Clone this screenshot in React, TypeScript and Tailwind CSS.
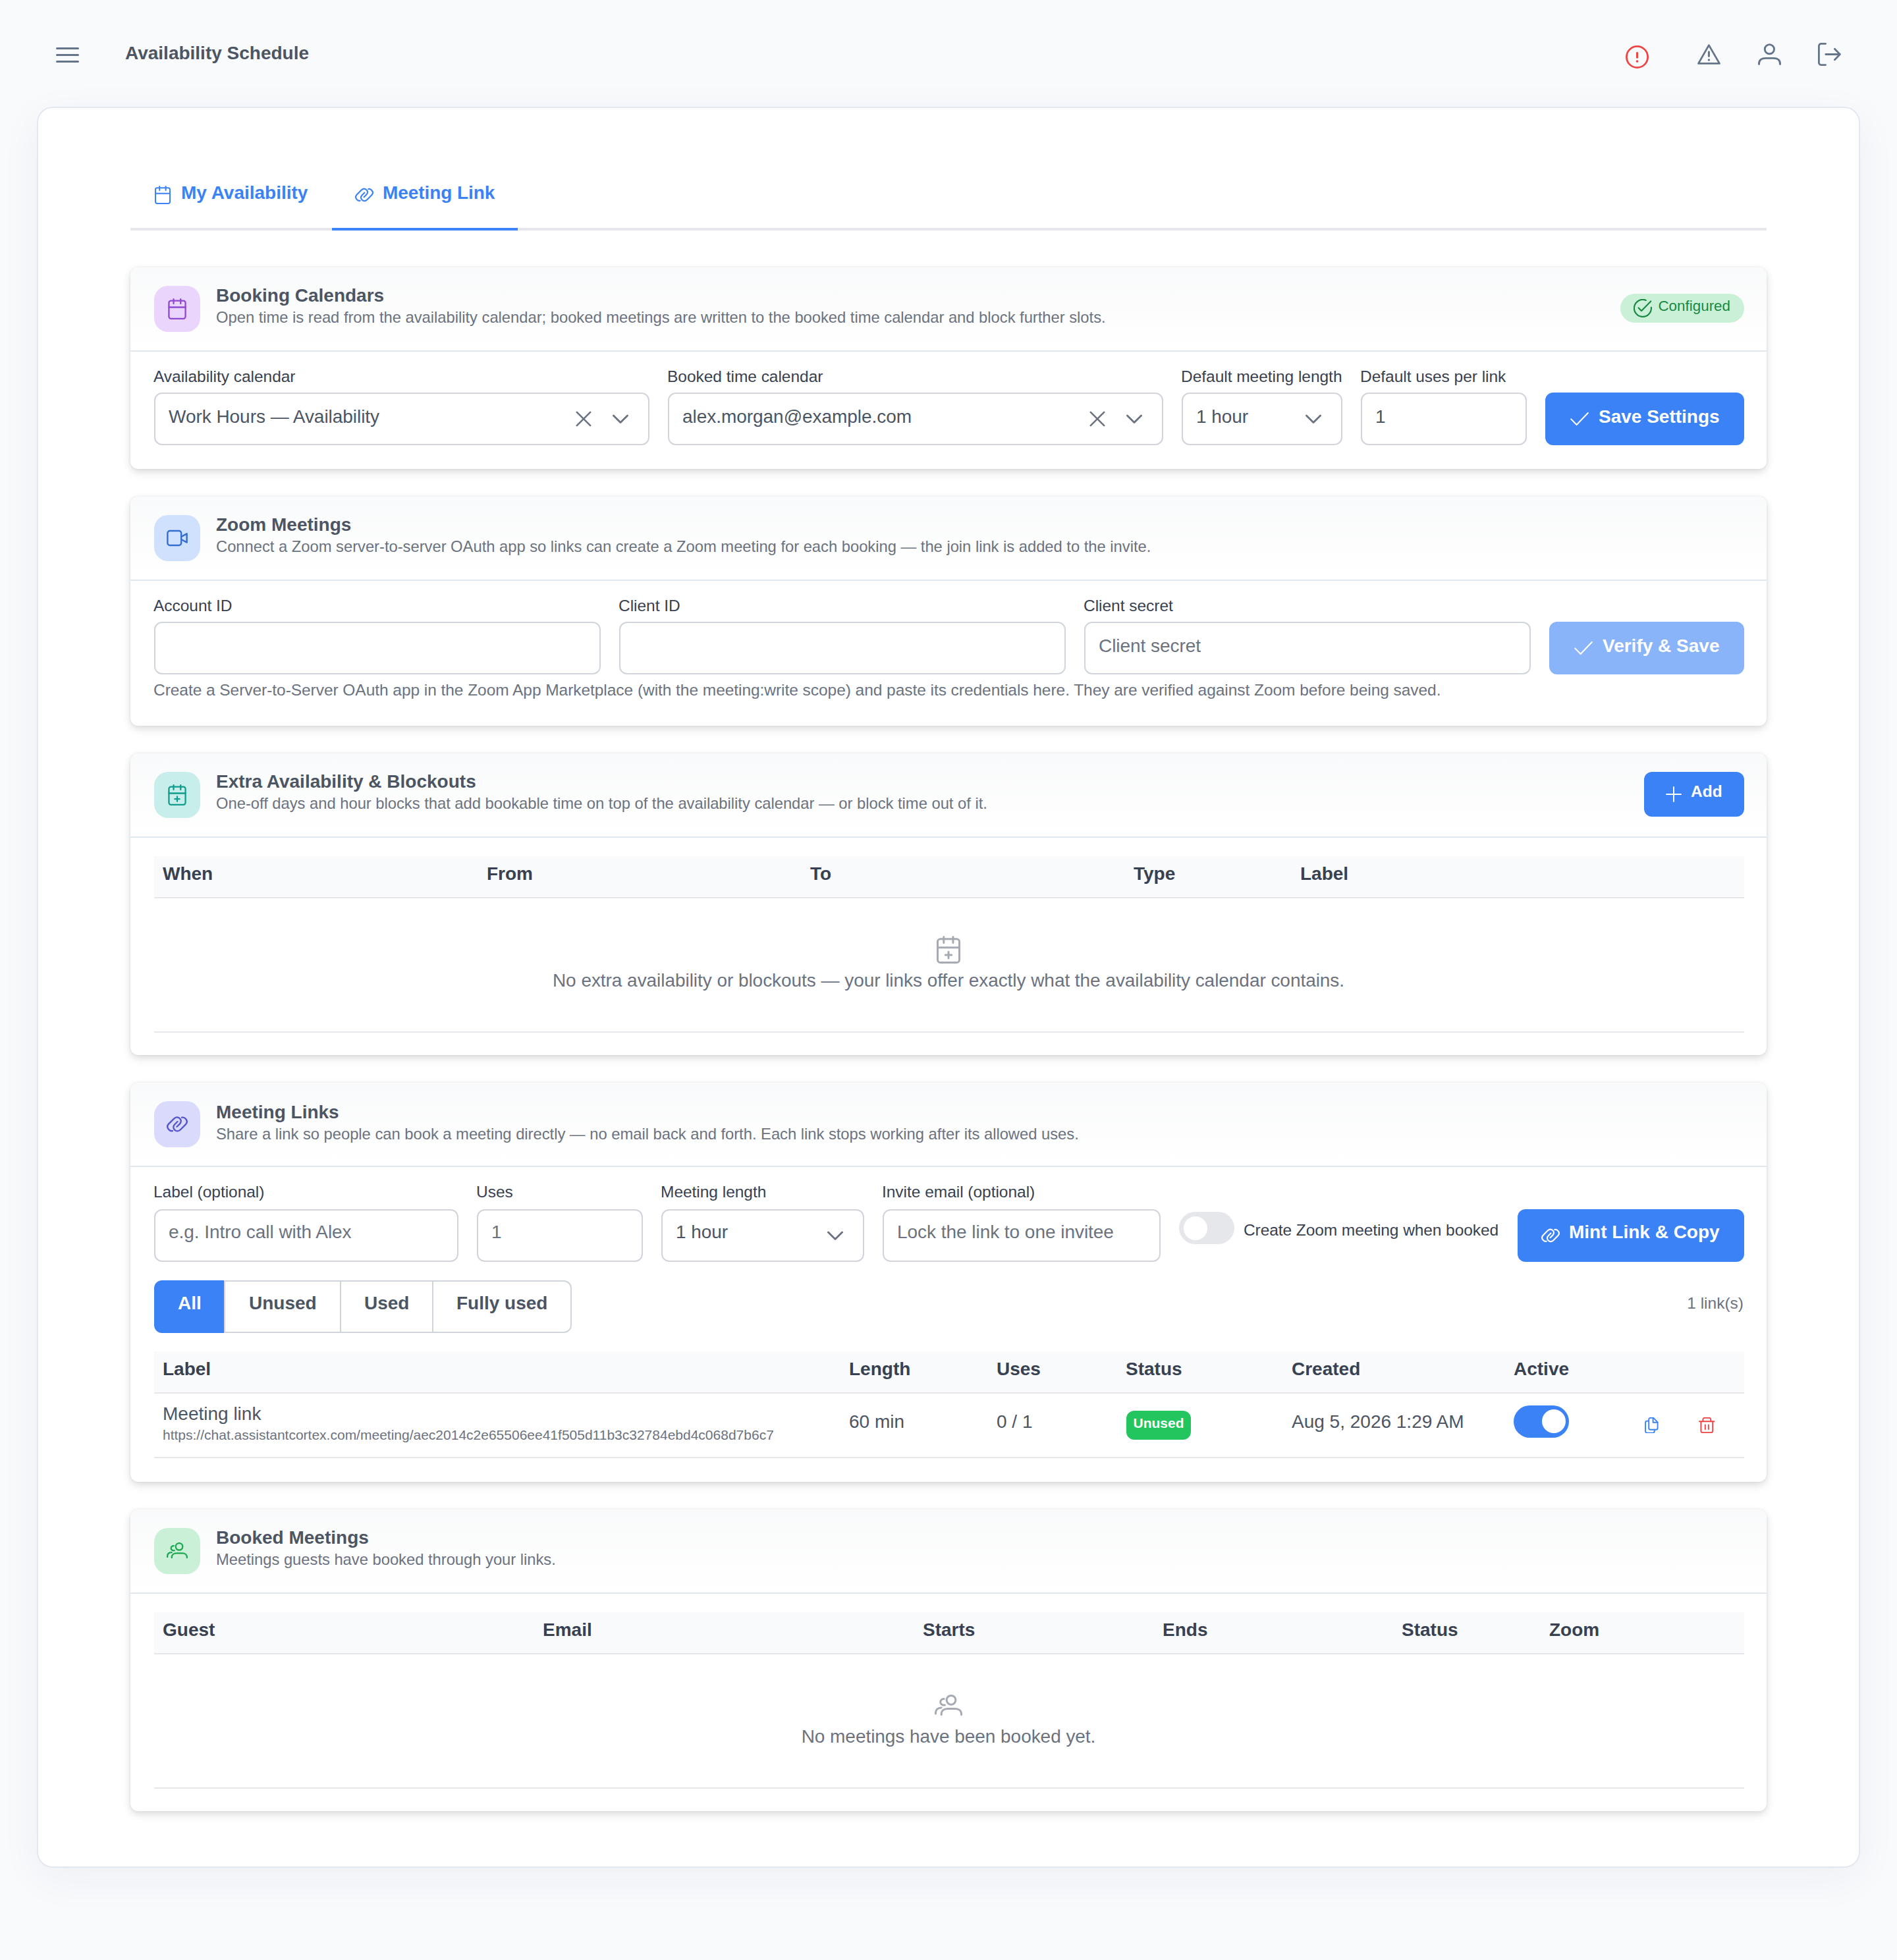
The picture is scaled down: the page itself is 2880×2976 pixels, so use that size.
import type { ReactNode } from "react";

type IconProps = { className?: string };

/* ---------- icons ---------- */

function Menu() {
  return (
    <svg viewBox="0 0 35 35" className="mt-[5px] size-[35px]" fill="none" stroke="currentColor" strokeWidth="3" strokeLinecap="round">
      <path d="M1.5 7.5H33.5M1.5 17.5H33.5M1.5 27.5H33.5" />
    </svg>
  );
}

function AlertCircle() {
  return (
    <svg viewBox="0 0 35 35" className="size-[35px]" fill="none" stroke="currentColor" strokeWidth="2.8" strokeLinecap="round">
      <circle cx="17.5" cy="17.5" r="16.1" />
      <path d="M17.5 11.3V18.2" strokeWidth="3" />
      <path d="M17.5 23.9V24.2" strokeWidth="3.4" />
    </svg>
  );
}

function AlertTriangle() {
  return (
    <svg viewBox="0 0 35 35" className="size-[35px]" fill="none" stroke="currentColor" strokeWidth="2.8" strokeLinecap="round" strokeLinejoin="round">
      <path d="M17.4 3.6 33.5 31.4H1.5Z" />
      <path d="M17.4 13.8V20.2" strokeWidth="3" />
      <path d="M17.4 25.9V26.1" strokeWidth="3.4" />
    </svg>
  );
}

function User() {
  return (
    <svg viewBox="0 0 35 35" className="size-[35px]" fill="none" stroke="currentColor" strokeWidth="2.9" strokeLinecap="round">
      <circle cx="17.4" cy="9.7" r="7.1" />
      <path d="M1.5 32.6V31.4C1.5 26 5.6 23.4 11.4 23.4H23.6C29.4 23.4 33.5 26 33.5 31.4V32.6" />
    </svg>
  );
}

function SignOut() {
  return (
    <svg viewBox="0 0 35 35" className="size-[35px]" fill="none" stroke="currentColor" strokeWidth="2.8" strokeLinecap="round" strokeLinejoin="round">
      <path d="M11.6 1.4H4.8A3.4 3.4 0 0 0 1.4 4.8V30.2A3.4 3.4 0 0 0 4.8 33.6H11.6" />
      <path d="M11.8 17.5H33.4M25.4 9.2 33.4 17.5 25.4 25.8" />
    </svg>
  );
}

function Calendar({ className = "size-[28px]", plus = false }: IconProps & { plus?: boolean }) {
  return (
    <svg viewBox="0 0 28 28" className={className} fill="none" stroke="currentColor" strokeWidth="2" strokeLinecap="round" strokeLinejoin="round">
      <rect x="3" y="3.2" width="22" height="23.8" rx="2.7" />
      <path d="M3 11.8H25M9.2 1V7M18.6 1V7" />
      {plus && <path d="M14 16.2V22.6M10.8 19.4H17.2" />}
    </svg>
  );
}

function Link({ className = "size-[28px]" }: IconProps) {
  const half = "M7.7 22.8C5.8 23.2 4.3 22.5 3.1 21.3C.5 18.7 .5 15.9 2.8 13.5L9.7 6.6C12.1 4.3 15.2 4.2 17.4 6.3C19.6 8.5 19.5 11.4 17.3 13.6L13.6 17.3";
  return (
    <svg viewBox="0 0 28 28" className={className} fill="none" stroke="currentColor" strokeWidth="2.1" strokeLinecap="round" strokeLinejoin="round">
      <path d={half} />
      <path d={half} transform="rotate(180 14 13.9)" />
    </svg>
  );
}

function Video({ className }: IconProps) {
  return (
    <svg viewBox="0 0 28 28" className={className} fill="none" stroke="currentColor" strokeWidth="2.1" strokeLinecap="round" strokeLinejoin="round">
      <rect x="1.2" y="4.4" width="18.2" height="19.2" rx="3" />
      <path d="M19.4 12.2 26.8 8.2V19.8L19.4 15.8" />
    </svg>
  );
}

function Users({ className }: IconProps) {
  return (
    <svg viewBox="0 0 42 42" className={className} fill="none" stroke="currentColor" strokeWidth="3" strokeLinecap="round">
      <circle cx="25" cy="12.3" r="6.9" />
      <path d="M10.2 34.4V33.6C10.2 28.6 14 25.4 19.4 25.4H31.4C36.8 25.4 40.5 28.6 40.5 33.6V34.4" />
      <path d="M14.2 10.6C11 10.4 8.7 12.6 8.7 15.4C8.7 18.5 11.7 20.6 15.4 20" />
      <path d="M1.5 33V31.8C1.5 27 4.6 24 10 23.9" />
    </svg>
  );
}

function Check() {
  return (
    <svg viewBox="0 0 28 28" className="size-[28px]" fill="none" stroke="currentColor" strokeWidth="2" strokeLinecap="round" strokeLinejoin="round">
      <path d="M1.2 14.4 9.6 23 26.8 5" />
    </svg>
  );
}

function CheckCircle() {
  return (
    <svg viewBox="0 0 28 28" className="size-[28px]" fill="none" stroke="currentColor" strokeWidth="2.2" strokeLinecap="round" strokeLinejoin="round">
      <path d="M18.8 1.9A13 13 0 1 0 26.9 12.8V14" />
      <path d="M7.6 13.4 12 18 26.2 3.4" />
    </svg>
  );
}

function Plus() {
  return (
    <svg viewBox="0 0 24 24" className="size-[24px]" fill="none" stroke="currentColor" strokeWidth="1.9" strokeLinecap="round">
      <path d="M12 1V23M1 12H23" />
    </svg>
  );
}

function Cross() {
  return (
    <svg viewBox="0 0 28 28" className="size-[28px]" fill="none" stroke="currentColor" strokeWidth="2.6" strokeLinecap="round">
      <path d="M3.8 3.8 24.2 24.2M24.2 3.8 3.8 24.2" />
    </svg>
  );
}

function Chevron() {
  return (
    <svg viewBox="0 0 28 28" className="size-[28px]" fill="none" stroke="currentColor" strokeWidth="2.8" strokeLinecap="round" strokeLinejoin="round">
      <path d="M3.4 9 14 19.6 24.6 9" />
    </svg>
  );
}

function Copy() {
  return (
    <svg viewBox="0 0 24.5 24.5" className="size-[24.5px]" fill="none" stroke="currentColor" strokeWidth="1.9" strokeLinejoin="round" strokeLinecap="round">
      <path d="M10.6 .9H15.2L21.6 7.4V16.2A2.6 2.6 0 0 1 19 18.8H10.8A2.6 2.6 0 0 1 8.2 16.2V3.3A2.4 2.4 0 0 1 10.6 .9Z" />
      <path d="M14.6 1.2V7.8H21.4" />
      <path d="M7.6 5.6H5.6A2.5 2.5 0 0 0 3.1 8.1V21A2.6 2.6 0 0 0 5.7 23.6H14.2A2.6 2.6 0 0 0 16.8 21V19.6" />
    </svg>
  );
}

function Trash() {
  return (
    <svg viewBox="0 0 24.5 24.5" className="size-[24.5px]" fill="none" stroke="currentColor" strokeWidth="1.9" strokeLinejoin="round" strokeLinecap="round">
      <path d="M.9 6.2H23.6M3.4 6.2V20.9A2.2 2.2 0 0 0 5.6 23.1H19A2.2 2.2 0 0 0 21.2 20.9V6.2" />
      <path d="M6.4 6.2V3.2A2.3 2.3 0 0 1 8.7 .9H16A2.3 2.3 0 0 1 18.3 3.2V6.2M9.8 11.4V18.2M14.8 11.4V18.2" />
    </svg>
  );
}

/* ---------- building blocks ---------- */

function Card({
  tile,
  icon,
  title,
  subtitle,
  action,
  titlePad = "pb-[10px]",
  bodyClass,
  children,
}: {
  tile: string;
  icon: ReactNode;
  title: string;
  subtitle: string;
  action?: ReactNode;
  titlePad?: string;
  bodyClass: string;
  children: ReactNode;
}) {
  return (
    <section className="rounded-[12px] bg-white shadow-[0_8px_20px_rgba(0,0,0,0.03),0_0_4px_rgba(0,0,0,0.06),0_4px_12px_rgba(0,0,0,0.12)]">
      <header className="flex h-[128px] items-center rounded-t-[12px] border-b-2 border-[#dfe7ef] bg-linear-to-b from-[#f9fafb] to-white pr-[34px] pl-[36px]">
        <div className={`flex size-[70px] items-center justify-center rounded-[21px] ${tile}`}>{icon}</div>
        <div className={`ml-[24px] flex-1 ${titlePad}`}>
          <h2 className="text-[28px] leading-[34px] font-bold text-[#4b5563]">{title}</h2>
          <p className="mt-px text-[23.8px] leading-[30px] tracking-[-0.03px] text-[#6b7280]">{subtitle}</p>
        </div>
        {action}
      </header>
      <div className={`pr-[34px] pl-[36px] ${bodyClass}`}>{children}</div>
    </section>
  );
}

function Field({
  label,
  width,
  text,
  muted = false,
  clear = false,
  select = false,
  low = true,
}: {
  label: string;
  width: string;
  text?: string;
  muted?: boolean;
  clear?: boolean;
  select?: boolean;
  low?: boolean;
}) {
  return (
    <div className={width}>
      <div className={`-ml-px h-[35px] text-[24.5px] leading-[35px] tracking-[-0.03px] whitespace-nowrap text-[#374151] ${low ? "mb-[7px]" : "mb-[9px]"}`}>{label}</div>
      <div className="flex h-[80px] items-center rounded-[12px] border-2 border-[#d1d5db] bg-white pl-[20px] text-[28px] leading-[34px]">
        <span className={`flex-1 tracking-[-0.04px] whitespace-nowrap ${low ? "pb-[7px]" : "pb-[11px]"} ${muted ? "text-[#6b7280]" : "text-[#4b5563]"}`}>{text}</span>
        {clear && (
          <span className="text-[#6b7280]">
            <Cross />
          </span>
        )}
        {select && (
          <span className="mr-[28px] ml-[28px] text-[#6b7280]">
            <Chevron />
          </span>
        )}
      </div>
    </div>
  );
}

function Button({
  width,
  icon,
  label,
  tone = "bg-[#3b82f6]",
  spacing = "pl-[38px] gap-[15px]",
  textPad = "pb-[7px]",
}: {
  width: string;
  icon: ReactNode;
  label: string;
  tone?: string;
  spacing?: string;
  textPad?: string;
}) {
  return (
    <button className={`flex h-[80px] shrink-0 items-center rounded-[12px] text-[28px] leading-[34px] font-bold whitespace-nowrap text-white ${spacing} ${width} ${tone}`}>
      {icon}
      <span className={textPad}>{label}</span>
    </button>
  );
}

function Switch({ on }: { on: boolean }) {
  return (
    <span className={`flex h-[49px] w-[84px] shrink-0 items-center rounded-full ${on ? "justify-end bg-[#3b82f6] pr-[5px]" : "bg-[#e5e7eb] pl-[7px]"}`}>
      <span className="size-[36px] rounded-full bg-white" />
    </span>
  );
}

function TableHead({ grid, columns }: { grid: string; columns: string[] }) {
  return (
    <div className={`grid h-[64px] items-center border-b-2 border-[#e5e7eb] bg-[#f9fafb] text-[28px] leading-[34px] font-bold text-[#374151] ${grid}`}>
      {columns.map((c) => (
        <span key={c} className="pb-[9px] pl-[13px]">
          {c}
        </span>
      ))}
    </div>
  );
}

function EmptyRow({ icon, text }: { icon: ReactNode; text: string }) {
  return (
    <div className="flex h-[204px] flex-col items-center border-b-2 border-[#e5e7eb] pt-[57px] pr-[2px]">
      <span className="text-[#a6abb3]">{icon}</span>
      <p className="mt-[9px] text-[28px] leading-[34px] tracking-[-0.05px] text-[#6b7280]">{text}</p>
    </div>
  );
}

/* ---------- page ---------- */

const linkGrid = "grid-cols-[1042px_224px_196px_252px_337px_363px]";

export default function App() {
  return (
    <div className="h-[2976px] w-[2880px] overflow-hidden bg-[#f9fafc] font-['Liberation_Sans',Arial,sans-serif]">
      <header className="flex h-[162px] items-center px-[85px] text-[#64748b]">
        <Menu />
        <h1 className="ml-[70px] flex-1 pb-px text-[28px] leading-[34px] font-bold text-[#4b5563]">Availability Schedule</h1>
        <div className="flex pt-[7px]">
          <span className="mt-[4px] mr-[74px] text-[#ef4444]">
            <AlertCircle />
          </span>
          <span className="mr-[57px]">
            <AlertTriangle />
          </span>
          <span className="mr-[56px]">
            <User />
          </span>
          <SignOut />
        </div>
      </header>

      <main className="mx-[56px] h-[2674px] rounded-[24px] border-2 border-[#e2e8f0] bg-white px-[140px] pt-[82px] shadow-[0_16px_64px_rgba(30,41,90,0.05)]">
        <nav className="flex text-[28px] leading-[34px] font-bold text-[#3b82f6]">
          <div className="flex h-[104px] w-[306px] items-center gap-[14px] border-b-4 border-[#e5e7eb] pl-[35px]">
            <Calendar />
            <span className="pb-[7px] whitespace-nowrap">My Availability</span>
          </div>
          <div className="flex h-[104px] w-[282px] items-center gap-[14px] border-b-4 border-[#3b82f6] pl-[35px]">
            <Link />
            <span className="pb-[7px] tracking-[-0.08px] whitespace-nowrap">Meeting Link</span>
          </div>
          <div className="flex-1 border-b-4 border-[#e5e7eb]" />
        </nav>

        <div className="mt-[56px] flex flex-col gap-[42px]">
          <Card
            tile="bg-[#ead6fd] text-[#8f48d2]"
            icon={<Calendar className="size-[32px]" />}
            title="Booking Calendars"
            subtitle="Open time is read from the availability calendar; booked meetings are written to the booked time calendar and block further slots."
            bodyClass="pt-[20px] pb-[36px]"
            action={
              <span className="mb-[2px] flex h-[44px] items-center gap-[9px] rounded-full bg-[#caf1d8] pr-[21px] pl-[20px] text-[22.4px] leading-[28px] text-[#188a42]">
                <CheckCircle />
                <span className="pb-[6px]">Configured</span>
              </span>
            }
          >
            <div className="flex items-end gap-[28px]">
              <Field label="Availability calendar" width="flex-1" text="Work Hours — Availability" clear select />
              <Field label="Booked time calendar" width="flex-1" text="alex.morgan@example.com" clear select />
              <Field label="Default meeting length" width="w-[244px]" text="1 hour" select />
              <Field label="Default uses per link" width="w-[252px]" text="1" />
              <Button width="w-[302px]" icon={<Check />} label="Save Settings" />
            </div>
          </Card>

          <Card
            tile="bg-[#d0e1fd] text-[#326fd1]"
            icon={<Video className="size-[32px]" />}
            title="Zoom Meetings"
            subtitle="Connect a Zoom server-to-server OAuth app so links can create a Zoom meeting for each booking — the join link is added to the invite."
            bodyClass="pt-[20px] pb-[37px]"
          >
            <div className="flex items-end gap-[28px]">
              <Field label="Account ID" width="flex-1" />
              <Field label="Client ID" width="flex-1" />
              <Field label="Client secret" width="flex-1" text="Client secret" muted />
              <Button width="w-[296px]" icon={<Check />} label="Verify & Save" tone="bg-[#89b4fa]" />
            </div>
            <p className="mt-[6px] -ml-px text-[24.5px] leading-[35px] tracking-[-0.05px] text-[#6b7280]">
              Create a Server-to-Server OAuth app in the Zoom App Marketplace (with the meeting:write scope) and paste its credentials here. They are verified against Zoom before being saved.
            </p>
          </Card>

          <Card
            tile="bg-[#c7eeea] text-[#119c8d]"
            icon={<Calendar plus className="size-[32px]" />}
            title="Extra Availability & Blockouts"
            subtitle="One-off days and hour blocks that add bookable time on top of the availability calendar — or block time out of it."
            bodyClass="pt-[28px] pb-[34px]"
            action={
              <button className="mb-[2px] flex h-[68px] w-[152px] items-center gap-[14px] rounded-[12px] bg-[#3b82f6] pl-[33px] text-[24.5px] leading-[30px] font-bold text-white">
                <Plus />
                <span className="pb-[9px]">Add</span>
              </button>
            }
          >
            <TableHead grid="grid-cols-[492px_491px_491px_253px_687px]" columns={["When", "From", "To", "Type", "Label"]} />
            <EmptyRow icon={<Calendar plus className="size-[42px]" />} text="No extra availability or blockouts — your links offer exactly what the availability calendar contains." />
          </Card>

          <Card
            tile="bg-[#dadafc] text-[#5457cd]"
            icon={<Link className="size-[32px]" />}
            title="Meeting Links"
            subtitle="Share a link so people can book a meeting directly — no email back and forth. Each link stops working after its allowed uses."
            titlePad="pb-[6px]"
            bodyClass="pt-[20px] pb-[36px]"
          >
            <div className="flex items-end gap-[28px]">
              <Field low={false} label="Label (optional)" width="w-[462px]" text="e.g. Intro call with Alex" muted />
              <Field low={false} label="Uses" width="w-[252px]" text="1" muted />
              <Field low={false} label="Meeting length" width="w-[308px]" text="1 hour" select />
              <Field low={false} label="Invite email (optional)" width="w-[422px]" text="Lock the link to one invitee" muted />
              <div className="flex h-[80px] w-[486px] gap-[14px] pt-[4px]">
                <Switch on={false} />
                <span className="mt-[10px] text-[24.5px] leading-[35px] tracking-[-0.08px] whitespace-nowrap text-[#374151]">Create Zoom meeting when booked</span>
              </div>
              <Button width="w-[344px]" icon={<Link />} label="Mint Link & Copy" spacing="pl-[36px] gap-[14px]" textPad="pb-[11px]" />
            </div>

            <div className="mt-[28px] flex h-[80px] items-center justify-between">
              <div className="flex h-[80px] text-[28px] leading-[34px] font-bold text-[#4b5563]">
                <span className="flex w-[106px] items-center justify-center rounded-l-[12px] bg-[#3b82f6] pb-[11px] pl-[2px] text-white">All</span>
                <span className="flex w-[176px] items-center border-y-2 border-l-2 border-[#d1d5db] pb-[11px] pl-[36px]">Unused</span>
                <span className="flex w-[140px] items-center border-y-2 border-l-2 border-[#d1d5db] pb-[11px] pl-[35px]">Used</span>
                <span className="flex w-[212px] items-center rounded-r-[12px] border-2 border-[#d1d5db] pb-[11px] pl-[35px] whitespace-nowrap">Fully used</span>
              </div>
              <span className="pr-px pb-[10px] text-[24.5px] leading-[30px] text-[#6b7280]">1 link(s)</span>
            </div>

            <div className="mt-[28px]">
              <TableHead grid={linkGrid} columns={["Label", "Length", "Uses", "Status", "Created", "Active"]} />
              <div className={`grid h-[98px] items-center border-b-2 border-[#e5e7eb] text-[28px] leading-[34px] text-[#4b5563] ${linkGrid}`}>
                <div className="pb-[5px] pl-[13px]">
                  <div>Meeting link</div>
                  <div className="mt-px text-[21px] leading-[28px] text-[#6b7280]">https://chat.assistantcortex.com/meeting/aec2014c2e65506ee41f505d11b3c32784ebd4c068d7b6c7</div>
                </div>
                <span className="pb-[11px] pl-[13px]">60 min</span>
                <span className="pb-[11px] pl-[13px]">0 / 1</span>
                <span className="ml-[14px] flex h-[44px] w-[98px] items-center justify-center rounded-[12px] bg-[#22c55e] text-[21px] leading-[26px] font-bold text-white">
                  <span className="pb-[6px]">Unused</span>
                </span>
                <span className="pb-[11px] pl-[13px] whitespace-nowrap">Aug 5, 2026 1:29 AM</span>
                <div className="flex items-center justify-between pr-[15px] pl-[13px]">
                  <span className="pb-[12px]">
                    <Switch on />
                  </span>
                  <span className="flex">
                    <span className="flex w-[84px] justify-center text-[#3b82f6]">
                      <Copy />
                    </span>
                    <span className="flex w-[84px] justify-center text-[#ef4444]">
                      <Trash />
                    </span>
                  </span>
                </div>
              </div>
            </div>
          </Card>

          <Card
            tile="bg-[#caf1d8] text-[#1ea750]"
            icon={<Users className="size-[32px]" />}
            title="Booked Meetings"
            subtitle="Meetings guests have booked through your links."
            bodyClass="pt-[28px] pb-[34px]"
          >
            <TableHead grid="grid-cols-[577px_577px_364px_363px_224px_309px]" columns={["Guest", "Email", "Starts", "Ends", "Status", "Zoom"]} />
            <EmptyRow icon={<Users className="size-[42px]" />} text="No meetings have been booked yet." />
          </Card>
        </div>
      </main>
    </div>
  );
}
